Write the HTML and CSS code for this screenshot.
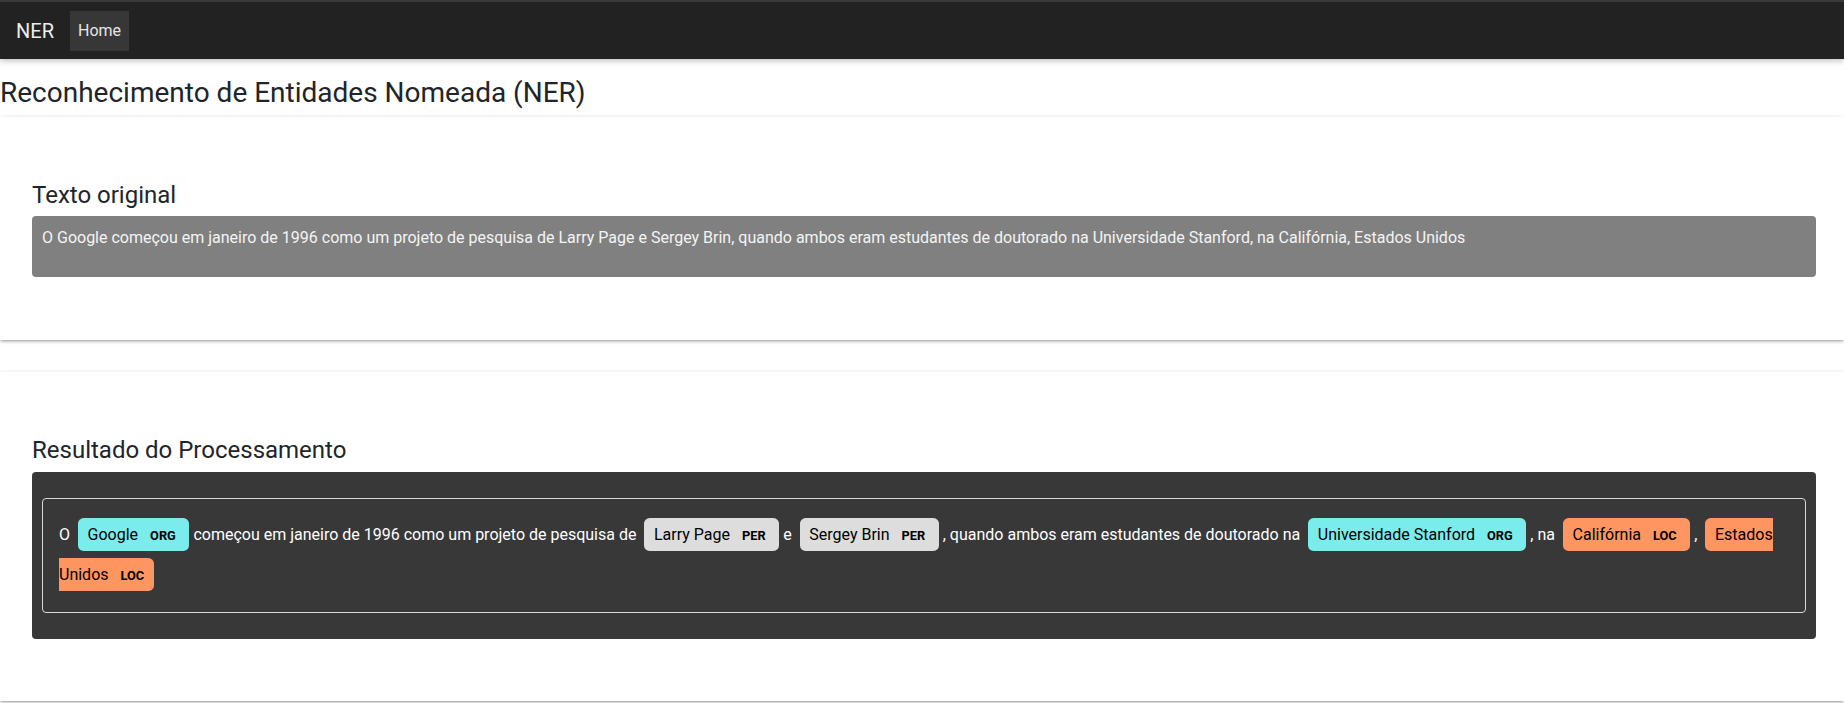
FILE: index.html
```html
<!DOCTYPE html>
<html lang="pt">
<head>
<meta charset="utf-8">
<title>NER</title>
<link rel="stylesheet" href="styles.css">
</head>
<body>
<nav class="navbar">
  <span class="brand">NER</span>
  <a class="nav-link" href="#">Home</a>
</nav>
<h1 class="page-title">Reconhecimento de Entidades Nomeada (NER)</h1>
<section class="card">
  <h2 class="card-title">Texto original</h2>
  <div class="original-box">
    <p>O Google começou em janeiro de 1996 como um projeto de pesquisa de Larry Page e Sergey Brin, quando ambos eram estudantes de doutorado na Universidade Stanford, na Califórnia, Estados Unidos</p>
  </div>
</section>
<section class="card card-last">
  <h2 class="card-title">Resultado do Processamento</h2>
  <div class="result-box">
    <div class="entities">O <mark class="ent ent-org">Google <span class="ent-label">ORG</span> </mark> começou em janeiro de 1996 como um projeto de pesquisa de <mark class="ent ent-per">Larry Page <span class="ent-label">PER</span> </mark> e <mark class="ent ent-per">Sergey Brin <span class="ent-label">PER</span> </mark> , quando ambos eram estudantes de doutorado na <mark class="ent ent-org">Universidade Stanford <span class="ent-label">ORG</span> </mark> , na <mark class="ent ent-loc">Califórnia <span class="ent-label">LOC</span> </mark> , <mark class="ent ent-loc">Estados Unidos <span class="ent-label">LOC</span> </mark></div>
  </div>
</section>
</body>
</html>
```
FILE: styles.css
```css
* { box-sizing: border-box; }
html, body {
  margin: 0;
  padding: 0;
  background: #fff;
}
body {
  font-family: Roboto, "Noto Sans", "Liberation Sans", sans-serif;
  font-size: 16px;
  line-height: 1.5;
  color: #212529;
}
.navbar {
  display: flex;
  align-items: center;
  height: 59px;
  border-top: 2px solid #3a3a3a;
  background: #222222;
  padding: 0 16px;
  box-shadow: 0 2px 6px rgba(0,0,0,0.25);
  position: relative;
  z-index: 2;
}
.brand {
  color: #ececec;
  font-size: 20px;
  line-height: 30px;
  margin-right: 16px;
}
.nav-link {
  display: block;
  color: #e6e6e6;
  text-decoration: none;
  padding: 8px;
  background: #373737;
  line-height: 24px;
  font-size: 16px;
}
.page-title {
  font-size: 28px;
  font-weight: 400;
  line-height: 1.2;
  margin: 17px 0 7px;
  color: #212529;
}
.card {
  background: #fff;
  padding: 64px 28px 63px 32px;
  margin: 0 0 32px;
  box-shadow: 0 2px 2px 0 rgba(0,0,0,0.12), 0 3px 1px -2px rgba(0,0,0,0.10), 0 1px 5px 0 rgba(0,0,0,0.16);
}
.card-last {
  padding-bottom: 62px;
}
.card-title {
  font-size: 24px;
  font-weight: 400;
  line-height: 1.2;
  margin: 0 0 7px;
  color: #212529;
}
.original-box {
  background: #808080;
  color: #f4f4f4;
  padding: 10px;
  border-radius: 4px;
}
.original-box p {
  margin: 0 0 17px;
}
.result-box {
  background: #383838;
  color: #fff;
  padding: 10px;
  border-radius: 4px;
}
.entities {
  line-height: 2.5;
  direction: ltr;
  margin: 16px 0;
  border: 1px solid #d8d8d8;
  border-radius: 4px;
  padding: 16px 16px 17px;
}
.ent {
  color: #000;
  padding: 0.45em 0.6em;
  margin: 0 0.25em;
  line-height: 1;
  border-radius: 0.35em;
}
.ent-org { background: #7aecec; }
.ent-per { background: #dddddd; }
.ent-loc { background: #ff9561; }
.ent-label {
  font-size: 0.8em;
  font-weight: bold;
  line-height: 1;
  border-radius: 0.35em;
  vertical-align: middle;
  margin-left: 0.5rem;
}
```
